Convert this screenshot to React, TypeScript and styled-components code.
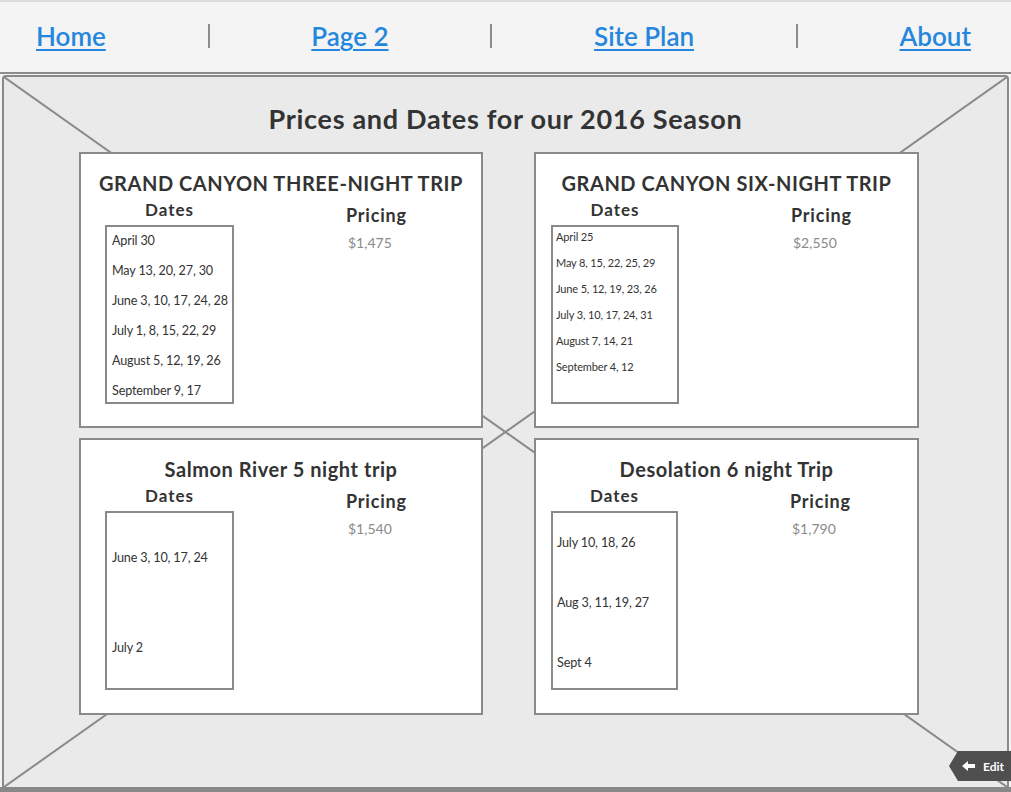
import * as React from "react";
import styled, { createGlobalStyle } from "styled-components";

const GlobalStyle = createGlobalStyle`
  html, body {
    margin: 0;
    padding: 0;
    background: #f4f4f4;
  }
  body {
    font-family: Lato, "Open Sans", sans-serif;
    color: #333;
  }
`;

const Page = styled.div`
  position: relative;
  width: 1011px;
  height: 792px;
  display: flex;
  flex-direction: column;
  overflow: hidden;
  background: #f4f4f4;
`;

const NavBar = styled.nav`
  flex: none;
  box-sizing: border-box;
  height: 74px;
  display: flex;
  align-items: center;
  justify-content: space-between;
  padding: 0 40px 2px 36px;
  border-top: 2px solid #dcdcdc;
  border-bottom: 2px solid #8c8c8c;
  background: #f4f4f4;
`;

const NavLink = styled.a`
  font-size: 26px;
  font-weight: 600;
  color: #2487dd;
  text-decoration: underline;
  text-decoration-thickness: 2px;
  text-underline-offset: 3px;
  cursor: pointer;
`;

const NavDivider = styled.span`
  width: 2px;
  height: 24px;
  background: #8c8c8c;
`;

const Canvas = styled.section`
  position: relative;
  flex: none;
  box-sizing: border-box;
  height: 712px;
  margin: 1px 2px 0;
  border: 2px solid #8a8a8a;
  border-bottom: none;
  border-radius: 4px 4px 0 0;
  background: #eaeaea;
  padding-top: 26px;
`;

const CrossLines = styled.svg`
  position: absolute;
  inset: 0;
  width: 100%;
  height: 100%;
`;

const Heading = styled.h1`
  position: relative;
  margin: 0 0 17px;
  font-size: 27px;
  font-weight: 700;
  line-height: 32px;
  letter-spacing: 0.7px;
  text-align: center;
  color: #333;
`;

const CardGrid = styled.div`
  position: relative;
  display: grid;
  grid-template-columns: 404px 385px;
  grid-template-rows: 276px 277px;
  column-gap: 51px;
  row-gap: 10px;
  margin-left: 75px;
`;

const Card = styled.article`
  box-sizing: border-box;
  display: flex;
  flex-direction: column;
  padding-top: 18px;
  border: 2px solid #8a8a8a;
  background: #fff;
`;

const CardTitle = styled.h2`
  margin: 0;
  font-size: 20px;
  font-weight: 700;
  line-height: 22px;
  letter-spacing: 0.55px;
  text-align: center;
  color: #333;
`;

const Columns = styled.div<{ $inset: number }>`
  display: flex;
  align-items: flex-start;
  gap: 112px;
  margin-top: 6px;
  padding-left: ${(p) => p.$inset}px;
`;

const DatesCol = styled.div<{ $width: number }>`
  width: ${(p) => p.$width}px;
  display: flex;
  flex-direction: column;
  align-items: center;
`;

const ColLabel = styled.h3`
  margin: 0;
  font-size: 17px;
  font-weight: 700;
  line-height: 20px;
  letter-spacing: 1px;
  color: #333;
`;

const DateBox = styled.ul<{ $top: number; $gap: number; $left: number }>`
  align-self: stretch;
  box-sizing: border-box;
  height: 179px;
  margin: 5px 0 0;
  padding: ${(p) => p.$top}px 0 0 ${(p) => p.$left}px;
  display: flex;
  flex-direction: column;
  gap: ${(p) => p.$gap}px;
  list-style: none;
  border: 2px solid #8a8a8a;
`;

const DateItem = styled.li<{ $size: number }>`
  font-size: ${(p) => p.$size}px;
  line-height: 16px;
  letter-spacing: -0.15px;
  color: #333;
  white-space: nowrap;
`;

const PriceCol = styled.div`
  display: flex;
  flex-direction: column;
  padding-top: 4px;
`;

const PriceLabel = styled.h3`
  margin: 0;
  font-size: 18px;
  font-weight: 700;
  line-height: 22px;
  letter-spacing: 0.8px;
  color: #333;
`;

const Price = styled.span`
  margin-top: 8px;
  padding-left: 2px;
  font-size: 14px;
  line-height: 18px;
  color: #8a8a8a;
`;

const BottomStrip = styled.div`
  flex: none;
  height: 5px;
  background: #888;
`;

const EditTag = styled.button`
  position: absolute;
  right: 0;
  bottom: 11px;
  width: 62px;
  height: 30px;
  display: flex;
  align-items: center;
  gap: 8px;
  padding: 0 0 0 13px;
  border: none;
  background: #4f4f4f;
  color: #fff;
  font-family: Lato, "Open Sans", sans-serif;
  font-size: 12px;
  font-weight: 700;
  clip-path: polygon(9px 0, 100% 0, 100% 100%, 9px 100%, 0 50%);
  cursor: pointer;
`;

type Trip = {
  title: string;
  dates: string[];
  price: string;
  inset: number;
  boxWidth: number;
  itemSize: number;
  top: number;
  gap: number;
  left: number;
};

const trips: Trip[] = [
  {
    title: "GRAND CANYON THREE-NIGHT TRIP",
    dates: [
      "April 30",
      "May 13, 20, 27, 30",
      "June 3, 10, 17, 24, 28",
      "July 1, 8, 15, 22, 29",
      "August 5, 12, 19, 26",
      "September 9, 17",
    ],
    price: "$1,475",
    inset: 24,
    boxWidth: 129,
    itemSize: 12.6,
    top: 6,
    gap: 14,
    left: 5,
  },
  {
    title: "GRAND CANYON SIX-NIGHT TRIP",
    dates: [
      "April 25",
      "May 8, 15, 22, 25, 29",
      "June 5, 12, 19, 23, 26",
      "July 3, 10, 17, 24, 31",
      "August 7, 14, 21",
      "September 4, 12",
    ],
    price: "$2,550",
    inset: 15,
    boxWidth: 128,
    itemSize: 11,
    top: 2,
    gap: 10,
    left: 3,
  },
  {
    title: "Salmon River 5 night trip",
    dates: ["June 3, 10, 17, 24", "July 2"],
    price: "$1,540",
    inset: 24,
    boxWidth: 129,
    itemSize: 12.6,
    top: 37,
    gap: 74,
    left: 5,
  },
  {
    title: "Desolation 6 night Trip",
    dates: ["July 10, 18, 26", "Aug 3, 11, 19, 27", "Sept 4"],
    price: "$1,790",
    inset: 15,
    boxWidth: 127,
    itemSize: 12.6,
    top: 22,
    gap: 44,
    left: 4,
  },
];

const TripCard: React.FC<{ trip: Trip }> = ({ trip }) => (
  <Card>
    <CardTitle>{trip.title}</CardTitle>
    <Columns $inset={trip.inset}>
      <DatesCol $width={trip.boxWidth}>
        <ColLabel>Dates</ColLabel>
        <DateBox $top={trip.top} $gap={trip.gap} $left={trip.left}>
          {trip.dates.map((d) => (
            <DateItem key={d} $size={trip.itemSize}>
              {d}
            </DateItem>
          ))}
        </DateBox>
      </DatesCol>
      <PriceCol>
        <PriceLabel>Pricing</PriceLabel>
        <Price>{trip.price}</Price>
      </PriceCol>
    </Columns>
  </Card>
);

const links = ["Home", "Page 2", "Site Plan", "About"];

const App: React.FC = () => {
  return (
    <Page>
      <GlobalStyle />
      <NavBar>
        {links.map((l, i) => (
          <React.Fragment key={l}>
            {i > 0 && <NavDivider />}
            <NavLink>{l}</NavLink>
          </React.Fragment>
        ))}
      </NavBar>
      <Canvas>
        <CrossLines viewBox="0 0 100 100" preserveAspectRatio="none">
          <line x1="0" y1="0" x2="100" y2="100" stroke="#8a8a8a" strokeWidth="2" vectorEffect="non-scaling-stroke" />
          <line x1="100" y1="0" x2="0" y2="100" stroke="#8a8a8a" strokeWidth="2" vectorEffect="non-scaling-stroke" />
        </CrossLines>
        <Heading>Prices and Dates for our 2016 Season</Heading>
        <CardGrid>
          {trips.map((t) => (
            <TripCard key={t.title} trip={t} />
          ))}
        </CardGrid>
      </Canvas>
      <BottomStrip />
      <EditTag>
        <svg width="13" height="10" viewBox="0 0 13 10">
          <polygon points="0,5 6,0 6,3 13,3 13,7 6,7 6,10" fill="#fff" />
        </svg>
        Edit
      </EditTag>
    </Page>
  );
};

export default App;
